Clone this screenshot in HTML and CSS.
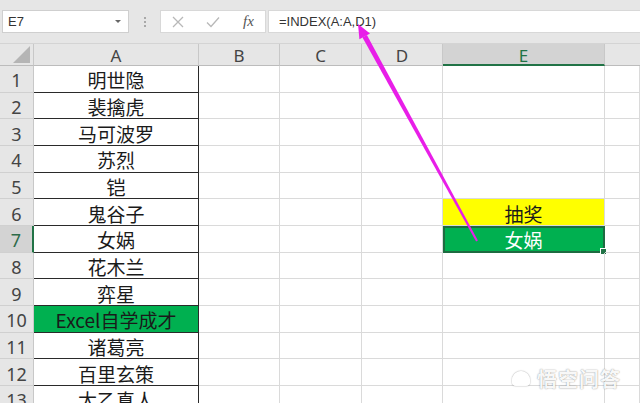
FILE: index.html
```html
<!DOCTYPE html>
<html>
<head>
<meta charset="utf-8">
<link rel="stylesheet" href="styles.css">
</head>
<body>
<div class="app">
  <div class="toolbar">
    <div class="namebox"><span>E7</span><span class="caret"></span></div>
    <div class="dots"><i></i><i></i><i></i></div>
    <div class="iconbox">
      <svg class="ico" width="14" height="14" viewBox="0 0 14 14"><path d="M2 2L12 12M12 2L2 12" stroke="#b8b8b8" stroke-width="1.3" fill="none"/></svg>
      <svg class="ico" width="16" height="14" viewBox="0 0 16 14"><path d="M2 7.5L6 11.5L14 2.5" stroke="#b8b8b8" stroke-width="1.3" fill="none"/></svg>
      <span class="fx">fx</span>
    </div>
    <div class="formula">=INDEX(A:A,D1)</div>
  </div>
  <div class="sheet">
    <div class="hd corner"><span class="tri"></span></div>
    <div class="hd">A</div>
    <div class="hd">B</div>
    <div class="hd">C</div>
    <div class="hd">D</div>
    <div class="hd sel-col">E</div>
    <div class="hd last"></div>

    <div class="rn">1</div><div class="c a">明世隐</div><div class="c"></div><div class="c"></div><div class="c"></div><div class="c"></div><div class="c"></div>
    <div class="rn">2</div><div class="c a">裴擒虎</div><div class="c"></div><div class="c"></div><div class="c"></div><div class="c"></div><div class="c"></div>
    <div class="rn">3</div><div class="c a">马可波罗</div><div class="c"></div><div class="c"></div><div class="c"></div><div class="c"></div><div class="c"></div>
    <div class="rn">4</div><div class="c a">苏烈</div><div class="c"></div><div class="c"></div><div class="c"></div><div class="c"></div><div class="c"></div>
    <div class="rn">5</div><div class="c a">铠</div><div class="c"></div><div class="c"></div><div class="c"></div><div class="c"></div><div class="c"></div>
    <div class="rn">6</div><div class="c a">鬼谷子</div><div class="c"></div><div class="c"></div><div class="c"></div><div class="c yellow">抽奖</div><div class="c"></div>
    <div class="rn sel-row">7</div><div class="c a">女娲</div><div class="c"></div><div class="c"></div><div class="c"></div><div class="c active">女娲</div><div class="c"></div>
    <div class="rn">8</div><div class="c a">花木兰</div><div class="c"></div><div class="c"></div><div class="c"></div><div class="c"></div><div class="c"></div>
    <div class="rn">9</div><div class="c a">弈星</div><div class="c"></div><div class="c"></div><div class="c"></div><div class="c"></div><div class="c"></div>
    <div class="rn">10</div><div class="c a green">Excel自学成才</div><div class="c"></div><div class="c"></div><div class="c"></div><div class="c"></div><div class="c"></div>
    <div class="rn">11</div><div class="c a">诸葛亮</div><div class="c"></div><div class="c"></div><div class="c"></div><div class="c"></div><div class="c"></div>
    <div class="rn">12</div><div class="c a">百里玄策</div><div class="c"></div><div class="c"></div><div class="c"></div><div class="c"></div><div class="c"></div>
    <div class="rn">13</div><div class="c a">太乙真人</div><div class="c"></div><div class="c"></div><div class="c"></div><div class="c"></div><div class="c"></div>
  </div>
  <svg class="arrow" width="640" height="403" viewBox="0 0 640 403">
    <polygon points="477.9,240.5 476.1,241.5 362.5,37.5 366.9,35.1" fill="#e81ee8"/>
    <polygon points="358,24 370,33.4 359.4,39.2" fill="#e81ee8"/>
  </svg>
  <div class="watermark"><span class="wm-logo"></span>悟空问答</div>
</div>
</body>
</html>
```
FILE: styles.css
```css
* { box-sizing: border-box; }
html, body { margin: 0; padding: 0; }
body {
  width: 640px;
  height: 403px;
  overflow: hidden;
  background: #ffffff;
  font-family: "Noto Sans", "Noto Sans CJK SC", sans-serif;
}
.app { position: relative; width: 640px; height: 403px; overflow: hidden; }

.toolbar {
  height: 44px;
  background: #e6e6e6;
  display: flex;
  align-items: center;
  padding-left: 2px;
  border-bottom: 1px solid #d4d4d4;
}
.namebox {
  width: 127px;
  height: 23px;
  background: #fff;
  border: 1px solid #cfcfcf;
  display: flex;
  align-items: center;
  justify-content: space-between;
  padding: 0 7px 0 5px;
  font-family: "Liberation Sans", sans-serif;
  font-size: 13px;
  color: #333;
}
.caret {
  width: 0; height: 0;
  border-left: 3px solid transparent;
  border-right: 3px solid transparent;
  border-top: 3px solid #666;
}
.dots {
  width: 31px;
  display: flex;
  flex-direction: column;
  align-items: center;
  gap: 2px;
}
.dots i { display: block; width: 2px; height: 2px; background: #a8a8a8; }
.iconbox {
  width: 106px;
  height: 23px;
  background: #fff;
  border: 1px solid #d8d8d8;
  display: flex;
  align-items: center;
  padding-left: 10px;
  gap: 20px;
}
.fx {
  font-family: "Liberation Serif", serif;
  font-style: italic;
  font-size: 15px;
  color: #555;
  margin-left: 2px;
}
.formula {
  flex: 1;
  height: 23px;
  margin-left: 2px;
  background: #fff;
  border: 1px solid #d8d8d8;
  border-right: none;
  display: flex;
  align-items: center;
  padding-left: 10px;
  font-family: "Liberation Sans", sans-serif;
  font-size: 13px;
  color: #333;
}

.sheet {
  display: grid;
  grid-template-columns: 34px 165px 81px 82px 81px 162px 1fr;
  grid-template-rows: 22px repeat(13, 26.67px);
}
.hd {
  background: #e6e6e6;
  border-right: 1px solid #c8c8c8;
  border-bottom: 1px solid #bcbcbc;
  display: flex;
  align-items: center;
  justify-content: center;
  padding-top: 2px;
  font-family: "Noto Sans", sans-serif;
  font-size: 17px;
  color: #444;
  line-height: 1;
}
.hd.last { border-right: none; }
.corner { position: relative; }
.tri {
  position: absolute;
  right: 3px;
  bottom: 2px;
  width: 0; height: 0;
  border-left: 17px solid transparent;
  border-bottom: 17px solid #b5b5b5;
}
.sel-col {
  background: #d3d3d3;
  color: #217346;
  border-bottom: 2px solid #217346;
}
.rn {
  background: #e6e6e6;
  border-right: 1px solid #c8c8c8;
  border-bottom: 1px solid #d0d0d0;
  display: flex;
  align-items: center;
  justify-content: center;
  padding-top: 3px;
  font-family: "Noto Sans", sans-serif;
  font-size: 18px;
  color: #444;
  line-height: 1;
}
.sel-row {
  background: #d3d3d3;
  color: #2d6b4a;
  border-right: 2px solid #217346;
}
.c {
  border-right: 1px solid #dadada;
  border-bottom: 1px solid #dadada;
  display: flex;
  align-items: center;
  justify-content: center;
  padding-top: 2px;
  font-family: "Noto Sans CJK SC", sans-serif;
  font-size: 19px;
  line-height: 1;
  color: #1a1a1a;
  position: relative;
}
.c.a {
  border-right: 1.5px solid #2a2a2a;
  border-bottom: 1px solid #2a2a2a;
}
.c.green { background: #00b050; color: #1a1a1a; }
.c.yellow { background: #ffff00; }
.c.active {
  background: #00b050;
  color: #ffffff;
  outline: 2px solid #1e6b41;
  outline-offset: -2px;
}
.c.active::after {
  content: "";
  position: absolute;
  right: -3px;
  bottom: -3px;
  width: 5px;
  height: 5px;
  background: #217346;
  border: 1px solid #fff;
}

.arrow { position: absolute; left: 0; top: 0; pointer-events: none; }

.watermark {
  position: absolute;
  left: 512px;
  top: 364px;
  display: flex;
  align-items: center;
  gap: 7px;
  font-family: "Noto Sans CJK SC", sans-serif;
  font-size: 20px;
  font-weight: bold;
  letter-spacing: 1px;
  color: rgba(255,255,255,0.95);
  text-shadow: 0 0 1px rgba(0,0,0,0.35), 0 0 2px rgba(0,0,0,0.2);
}
.wm-logo {
  width: 18px;
  height: 15px;
  border-radius: 9px 9px 4px 4px;
  background: rgba(255,255,255,0.95);
  box-shadow: 0 0 1px rgba(0,0,0,0.4), 0 0 2px rgba(0,0,0,0.2);
}
```
